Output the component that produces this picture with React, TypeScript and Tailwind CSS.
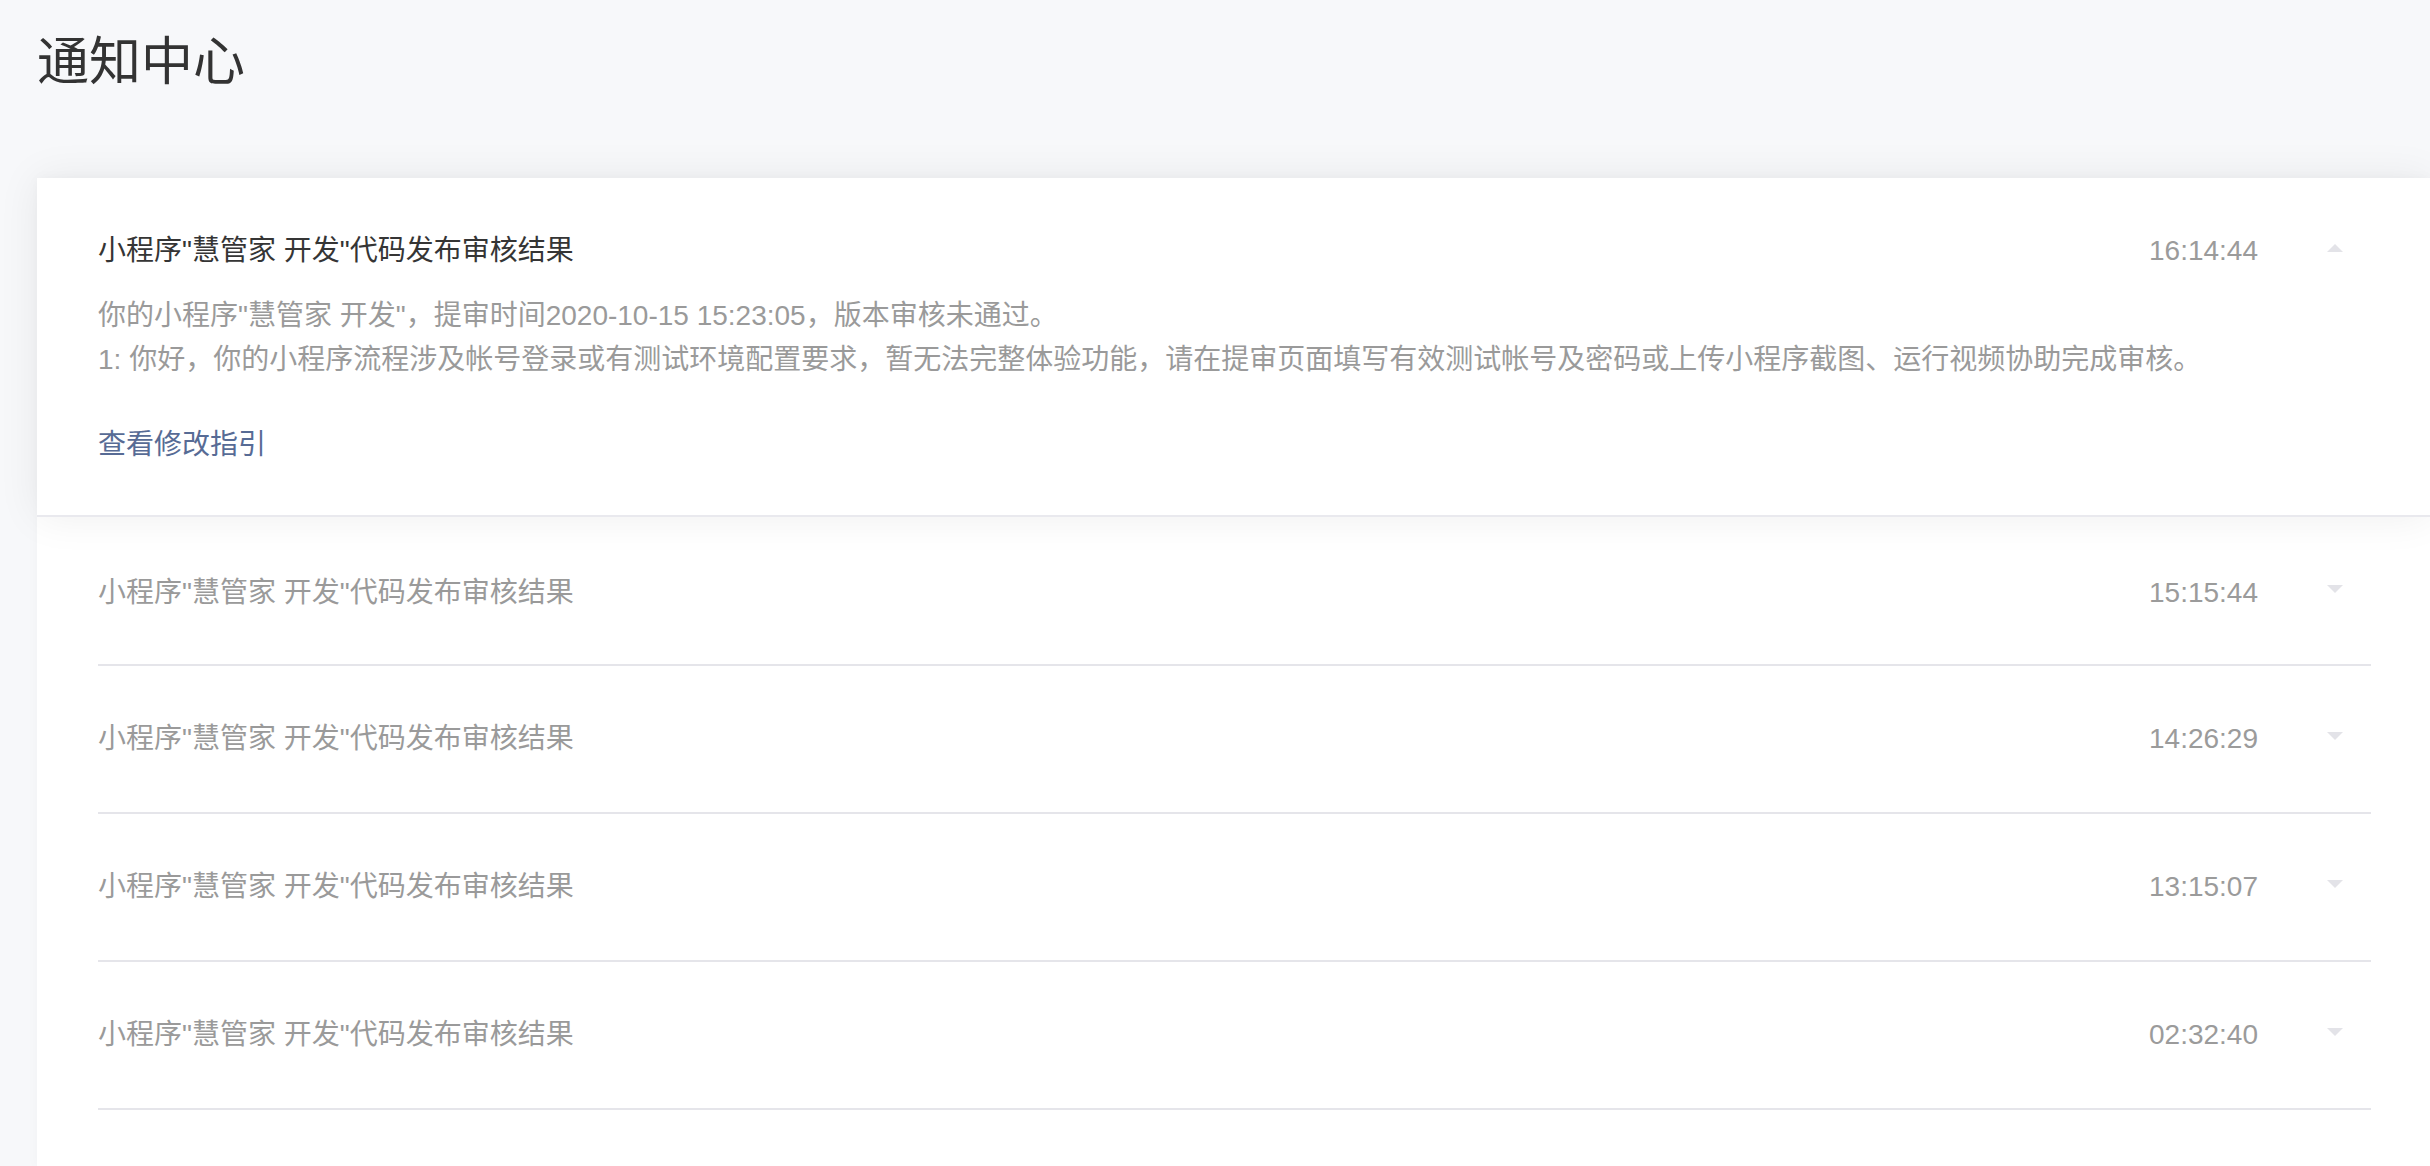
import React from "react";

const FONT = {
  fontFamily:
    '"Liberation Sans", Arial, "Noto Sans CJK SC", "Noto Sans", sans-serif',
};

function Caret({ up }: { up?: boolean }) {
  return (
    <svg width="16" height="8" viewBox="0 0 16 8" className="block">
      <path d={up ? "M0 8 L8 0 L16 8 Z" : "M0 0 L8 8 L16 0 Z"} fill="#e3e3e8" />
    </svg>
  );
}

const TITLE = '小程序"慧管家 开发"代码发布审核结果';

function RightCluster({ time, up }: { time: string; up?: boolean }) {
  return (
    <div className="flex items-center shrink-0">
      <span className="text-[28px] leading-[40px] text-[#9b9b9b]">{time}</span>
      <div className="ml-[69px] mr-[28px] mb-[7px]">
        <Caret up={up} />
      </div>
    </div>
  );
}

export default function App() {
  const rows = ["15:15:44", "14:26:29", "13:15:07", "02:32:40"];
  return (
    <div
      className="min-h-screen w-full bg-[#f7f8fa] pl-[37px] flex flex-col overflow-hidden"
      style={FONT}
    >
      <h1 className="text-[52px] leading-[72px] text-[#333333] font-normal mt-[26px] mb-[80px]">
        通知中心
      </h1>
      <div className="flex-1 bg-white shadow-[0_0_12px_rgba(0,0,0,0.03)]">
        <div className="relative z-10 bg-white border-b-2 border-[#e9e9ee] shadow-[0_0_40px_rgba(0,0,0,0.07)] pl-[61px] pr-[59px] pt-[53px] pb-[50px]">
          <div className="flex items-center justify-between">
            <span className="text-[28px] leading-[40px] text-[#353535]">{TITLE}</span>
            <RightCluster time="16:14:44" up />
          </div>
          <div className="mt-[23px] text-[28px] leading-[44px] text-[#9a9a9a]">
            <p>你的小程序"慧管家 开发"，提审时间2020-10-15 15:23:05，版本审核未通过。</p>
            <p>
              1: 你好，你的小程序流程涉及帐号登录或有测试环境配置要求，暂无法完整体验功能，请在提审页面填写有效测试帐号及密码或上传小程序截图、运行视频协助完成审核。
            </p>
          </div>
          <div className="mt-[43px] text-[28px] leading-[40px] text-[#576b95]">
            查看修改指引
          </div>
        </div>
        <div className="pl-[61px] pr-[59px]">
          {rows.map((t, i) => (
            <div
              key={t}
              className={
                "flex items-center justify-between border-b-2 border-[#e5e5ea] " +
                (i === 0 ? "h-[149px] pt-[4px]" : "h-[148px]")
              }
            >
              <span className="text-[28px] leading-[40px] text-[#9a9a9a]">{TITLE}</span>
              <RightCluster time={t} />
            </div>
          ))}
        </div>
      </div>
    </div>
  );
}
